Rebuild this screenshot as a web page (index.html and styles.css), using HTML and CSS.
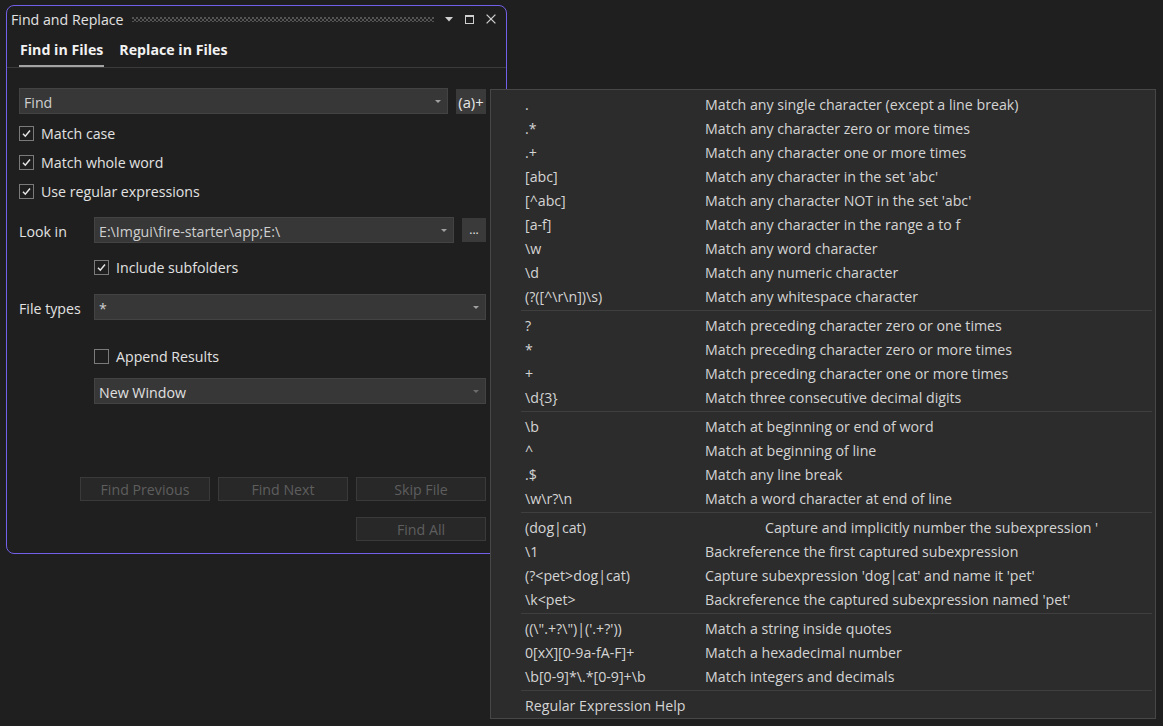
FILE: index.html
```html
<!DOCTYPE html>
<html>
<head>
<meta charset="utf-8">
<title>Find and Replace</title>
<link rel="stylesheet" href="styles.css">
</head>
<body>
<div class="window">
  <div class="titlebar">
    <span class="title">Find and Replace</span>
    <span class="gripper"></span>
    <svg class="tb-menu" width="8" height="5" viewBox="0 0 8 5"><polygon points="0,0 8,0 4,4.5" fill="#cfcfcf"/></svg>
    <svg class="tb-max" width="9" height="9" viewBox="0 0 9 9"><rect x="0.5" y="0.5" width="8" height="8" fill="none" stroke="#cfcfcf"/><rect x="0" y="0" width="9" height="2" fill="#cfcfcf"/></svg>
    <svg class="tb-close" width="10" height="10" viewBox="0 0 10 10"><path d="M0.6 0.6 L9.4 9.4 M9.4 0.6 L0.6 9.4" stroke="#cfcfcf" stroke-width="1.3"/></svg>
  </div>
  <div class="tabs">
    <div class="tab active">Find in Files</div>
    <div class="tab">Replace in Files</div>
  </div>
  <div class="content">
    <div class="find-row">
      <div class="combo"><span class="combo-text">Find</span><span class="caret"></span></div>
      <div class="regex-btn">(a)+</div>
    </div>
    <div class="checks">
      <div class="check"><span class="box"><svg width="13" height="13" viewBox="0 0 13 13"><path d="M3 6.8 L5.3 9.2 L10 3.6" fill="none" stroke="#e6e6e6" stroke-width="1.5"/></svg></span><span class="check-label">Match case</span></div>
      <div class="check"><span class="box"><svg width="13" height="13" viewBox="0 0 13 13"><path d="M3 6.8 L5.3 9.2 L10 3.6" fill="none" stroke="#e6e6e6" stroke-width="1.5"/></svg></span><span class="check-label">Match whole word</span></div>
      <div class="check"><span class="box"><svg width="13" height="13" viewBox="0 0 13 13"><path d="M3 6.8 L5.3 9.2 L10 3.6" fill="none" stroke="#e6e6e6" stroke-width="1.5"/></svg></span><span class="check-label">Use regular expressions</span></div>
    </div>
    <div class="field-row look-row">
      <span class="field-label">Look in</span>
      <div class="combo"><span class="combo-text">E:\Imgui\fire-starter\app;E:\</span><span class="caret"></span></div>
      <div class="dots-btn">...</div>
    </div>
    <div class="check indent sub-row"><span class="box"><svg width="13" height="13" viewBox="0 0 13 13"><path d="M3 6.8 L5.3 9.2 L10 3.6" fill="none" stroke="#e6e6e6" stroke-width="1.5"/></svg></span><span class="check-label">Include subfolders</span></div>
    <div class="field-row types-row">
      <span class="field-label">File types</span>
      <div class="combo"><span class="combo-text">*</span><span class="caret"></span></div>
    </div>
    <div class="check indent append-row"><span class="box"></span><span class="check-label">Append Results</span></div>
    <div class="indent window-row">
      <div class="combo"><span class="combo-text light">New Window</span><span class="caret dim"></span></div>
    </div>
    <div class="btn-row nav-row">
      <div class="btn">Find Previous</div>
      <div class="btn">Find Next</div>
      <div class="btn">Skip File</div>
    </div>
    <div class="btn-row all-row">
      <div class="btn">Find All</div>
    </div>
  </div>
</div>

<div class="popup">
  <div class="row"><span class="expr">.</span><span class="desc">Match any single character (except a line break)</span></div>
  <div class="row"><span class="expr">.*</span><span class="desc">Match any character zero or more times</span></div>
  <div class="row"><span class="expr">.+</span><span class="desc">Match any character one or more times</span></div>
  <div class="row"><span class="expr">[abc]</span><span class="desc">Match any character in the set 'abc'</span></div>
  <div class="row"><span class="expr">[^abc]</span><span class="desc">Match any character NOT in the set 'abc'</span></div>
  <div class="row"><span class="expr">[a-f]</span><span class="desc">Match any character in the range a to f</span></div>
  <div class="row"><span class="expr">\w</span><span class="desc">Match any word character</span></div>
  <div class="row"><span class="expr">\d</span><span class="desc">Match any numeric character</span></div>
  <div class="row"><span class="expr">(?([^\r\n])\s)</span><span class="desc">Match any whitespace character</span></div>
  <div class="sep"></div>
  <div class="row"><span class="expr">?</span><span class="desc">Match preceding character zero or one times</span></div>
  <div class="row"><span class="expr">*</span><span class="desc">Match preceding character zero or more times</span></div>
  <div class="row"><span class="expr">+</span><span class="desc">Match preceding character one or more times</span></div>
  <div class="row"><span class="expr">\d{3}</span><span class="desc">Match three consecutive decimal digits</span></div>
  <div class="sep"></div>
  <div class="row"><span class="expr">\b</span><span class="desc">Match at beginning or end of word</span></div>
  <div class="row"><span class="expr">^</span><span class="desc">Match at beginning of line</span></div>
  <div class="row"><span class="expr">.$</span><span class="desc">Match any line break</span></div>
  <div class="row"><span class="expr">\w\r?\n</span><span class="desc">Match a word character at end of line</span></div>
  <div class="sep"></div>
  <div class="row"><span class="expr">(dog|cat)</span><span class="desc clipped">Capture and implicitly number the subexpression '</span></div>
  <div class="row"><span class="expr">\1</span><span class="desc">Backreference the first captured subexpression</span></div>
  <div class="row"><span class="expr">(?&lt;pet&gt;dog|cat)</span><span class="desc">Capture subexpression 'dog|cat' and name it 'pet'</span></div>
  <div class="row"><span class="expr">\k&lt;pet&gt;</span><span class="desc">Backreference the captured subexpression named 'pet'</span></div>
  <div class="sep"></div>
  <div class="row"><span class="expr">((\".+?\")|('.+?'))</span><span class="desc">Match a string inside quotes</span></div>
  <div class="row"><span class="expr">0[xX][0-9a-fA-F]+</span><span class="desc">Match a hexadecimal number</span></div>
  <div class="row"><span class="expr">\b[0-9]*\.*[0-9]+\b</span><span class="desc">Match integers and decimals</span></div>
  <div class="sep"></div>
  <div class="row"><span class="expr wide">Regular Expression Help</span></div>
</div>
</body>
</html>
```

FILE: styles.css
```css
* { box-sizing: border-box; }

html, body {
  margin: 0;
  padding: 0;
}

body {
  width: 1163px;
  height: 726px;
  background: #1f1f1f;
  font-family: "Open Sans", "Noto Sans", Roboto, sans-serif;
  font-size: 14.2px;
  color: #dcdcdc;
  position: relative;
  overflow: hidden;
}

/* ---------- window ---------- */
.window {
  position: absolute;
  left: 6px;
  top: 5px;
  width: 501px;
  height: 549px;
  border: 1px solid #7160e8;
  border-radius: 8px;
  background: #1f1f1f;
  display: flex;
  flex-direction: column;
}

.titlebar {
  height: 26px;
  display: flex;
  align-items: center;
  padding: 0 0 0 4px;
}

.title {
  color: #e2e2e2;
  white-space: nowrap;
}

.gripper {
  flex: 1;
  height: 5px;
  margin: 1px 11px 0 8px;
  background-image:
    radial-gradient(circle at 1px 1px, #555 0.7px, transparent 1px),
    radial-gradient(circle at 1px 1px, #555 0.7px, transparent 1px);
  background-size: 4px 4px, 4px 4px;
  background-position: 0 0, 2px 2px;
}

.tb-menu { margin-right: 12px; margin-top: 1px; }
.tb-max { margin-right: 12px; }
.tb-close { margin-right: 10px; }

.tabs {
  height: 36px;
  display: flex;
  gap: 14px;
  padding-left: 12px;
  border-bottom: 1px solid #3b3b3b;
}

.tab {
  height: 35px;
  padding: 2px 1px 0;
  display: flex;
  align-items: center;
  font-weight: bold;
  color: #f2f2f2;
  border-bottom: 2px solid transparent;
}

.tab.active {
  border-bottom-color: #a3a3a3;
}

.content {
  padding: 20px 20px 0 12px;
  display: flex;
  flex-direction: column;
}

/* ---------- inputs ---------- */
.combo {
  flex: 1;
  height: 26px;
  background: #373737;
  border: 1px solid #434343;
  display: flex;
  align-items: center;
  padding: 0 6px 0 4px;
}

.combo-text {
  flex: 1;
  color: #cfcfcf;
  white-space: nowrap;
  overflow: hidden;
  padding-top: 2px;
}

.combo-text.light { color: #e0e0e0; }

.caret {
  width: 0;
  height: 0;
  border-left: 3.5px solid transparent;
  border-right: 3.5px solid transparent;
  border-top: 3.5px solid #a0a0a0;
}

.caret.dim { border-top-color: #6c6c6c; }

.find-row {
  display: flex;
  gap: 8px;
  align-items: flex-start;
}

.regex-btn {
  width: 30px;
  height: 25px;
  margin-top: 1px;
  background: #3a3a3a;
  color: #e6e6e6;
  display: flex;
  align-items: center;
  justify-content: center;
  font-size: 14.8px;
}

.checks {
  margin-top: 5px;
  display: flex;
  flex-direction: column;
}

.check {
  height: 29px;
  display: flex;
  align-items: center;
  gap: 7px;
}

.box {
  width: 15px;
  height: 15px;
  border: 1px solid #7a7a7a;
  display: flex;
  align-items: center;
  justify-content: center;
}

.check-label {
  color: #e2e2e2;
}

.field-row {
  display: flex;
  align-items: flex-start;
}

.field-label {
  width: 75px;
  height: 26px;
  display: flex;
  align-items: center;
  color: #e2e2e2;
  padding-top: 2px;
}

.look-row { margin-top: 11px; }
.look-row .combo { margin-right: 8px; }

.dots-btn {
  width: 24px;
  height: 24px;
  margin-top: 1px;
  background: #3a3a3a;
  color: #e6e6e6;
  display: flex;
  align-items: center;
  justify-content: center;
  font-size: 12px;
  padding-bottom: 2px;
}

.indent { margin-left: 75px; }

.sub-row { margin-top: 10px; height: 28px; }
.types-row { margin-top: 13px; }
.append-row { margin-top: 22px; height: 28px; }
.window-row { margin-top: 8px; display: flex; }

.btn-row {
  display: flex;
  justify-content: flex-end;
  gap: 8px;
}

.nav-row { margin-top: 73px; }
.all-row { margin-top: 16px; }

.btn {
  width: 130px;
  height: 24px;
  background: #282828;
  border: 1px solid #3a3a3a;
  color: #5e5e5e;
  display: flex;
  align-items: center;
  justify-content: center;
}

/* ---------- regex popup ---------- */
.popup {
  position: absolute;
  left: 490px;
  top: 89px;
  width: 666px;
  background: #2c2c2c;
  border: 1px solid #474747;
  padding: 2px 0 1px;
  display: flex;
  flex-direction: column;
  color: #d4d4d4;
}

.row {
  height: 24px;
  display: flex;
  align-items: center;
  padding-left: 34px;
  white-space: nowrap;
}

.expr {
  width: 180px;
  flex: none;
}

.expr.wide { width: auto; }

.desc {
  white-space: nowrap;
}

.desc.clipped {
  width: 393px;
  padding-left: 60px;
  overflow: hidden;
}

.sep {
  height: 1px;
  margin: 2px 3px 2px 30px;
  background: #3f3f3f;
}
```
